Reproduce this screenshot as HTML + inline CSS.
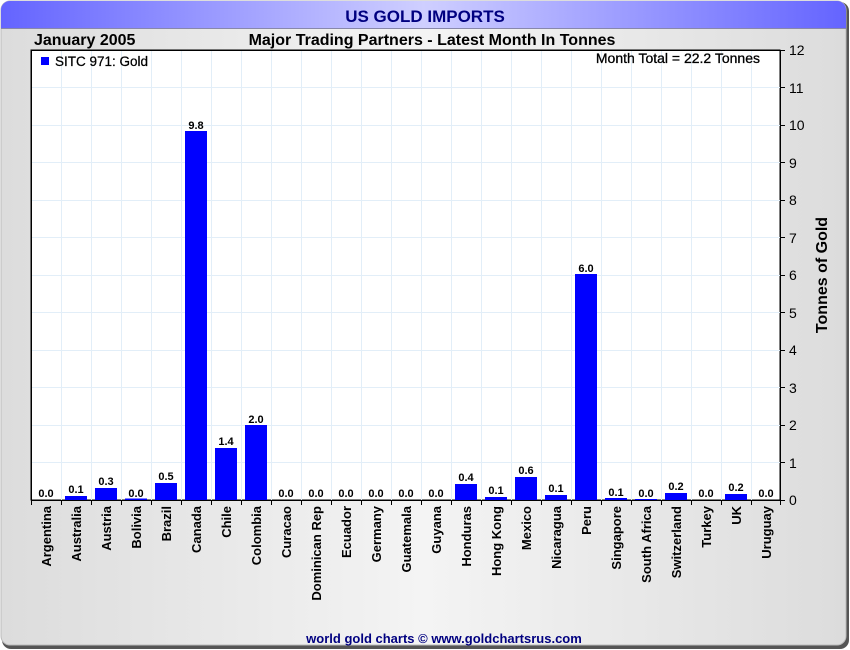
<!DOCTYPE html>
<html><head><meta charset="utf-8"><style>
body{margin:0;background:#fff;width:850px;height:650px;overflow:hidden}
svg{display:block;font-family:"Liberation Sans",Arial,sans-serif}
</style></head><body>
<svg width="850" height="650" viewBox="0 0 850 650">
<defs>
<linearGradient id="tb" x1="0" x2="1" y1="0" y2="0">
<stop offset="0" stop-color="#6464ff"/><stop offset="0.5" stop-color="#cfcfff"/><stop offset="1" stop-color="#6464ff"/></linearGradient>
<linearGradient id="bg" x1="0" x2="1" y1="0" y2="0">
<stop offset="0" stop-color="#dcdcdc"/><stop offset="0.5" stop-color="#f4f4f4"/><stop offset="1" stop-color="#dcdcdc"/></linearGradient>
</defs>
<rect x="2" y="2" width="847" height="647" rx="9" fill="#555"/>
<rect x="1" y="1" width="845" height="644" rx="9" fill="url(#bg)" stroke="#bbb"/>
<path d="M1 28 V10 A9 9 0 0 1 10 1 H837 A9 9 0 0 1 846 10 V28 Z" fill="url(#tb)"/>
<line x1="1" y1="28.5" x2="846" y2="28.5" stroke="#8888aa"/>
<text x="425" y="22" text-anchor="middle" font-size="17" font-weight="bold" fill="#000080">US GOLD IMPORTS</text>
<text x="34" y="45" font-size="16" font-weight="bold">January 2005</text>
<text x="432" y="45" text-anchor="middle" font-size="16" font-weight="bold">Major Trading Partners - Latest Month In Tonnes</text>
<rect x="31" y="50" width="749" height="450" fill="#fff" stroke="#000"/>
<g stroke="#e2eef8" stroke-width="1">
<path d="M61.5 51V500M91.5 51V500M121.5 51V500M151.5 51V500M181.5 51V500M211.5 51V500M241.5 51V500M271.5 51V500M301.5 51V500M331.5 51V500M361.5 51V500M391.5 51V500M421.5 51V500M451.5 51V500M481.5 51V500M511.5 51V500M541.5 51V500M571.5 51V500M601.5 51V500M631.5 51V500M661.5 51V500M691.5 51V500M721.5 51V500M751.5 51V500"/>
<path d="M32 87.5H780M32 125.5H780M32 162.5H780M32 200.5H780M32 237.5H780M32 275.5H780M32 312.5H780M32 350.5H780M32 387.5H780M32 425.5H780M32 462.5H780"/>
</g>
<rect x="31.5" y="50.5" width="749" height="450" fill="none" stroke="#000"/>
<rect x="41" y="57" width="8" height="8" fill="#0000ff"/>
<text x="55" y="66" font-size="13.5" stroke="#000" stroke-width="0.25">SITC 971: Gold</text>
<text x="760" y="63" text-anchor="end" font-size="14" stroke="#000" stroke-width="0.3">Month Total = 22.2 Tonnes</text>
<g fill="#0000ff">
<rect x="65" y="496" width="22" height="4"/>
<rect x="95" y="488" width="22" height="12"/>
<rect x="125" y="498.5" width="22" height="1.5"/>
<rect x="155" y="483" width="22" height="17"/>
<rect x="185" y="131" width="22" height="369"/>
<rect x="215" y="448" width="22" height="52"/>
<rect x="245" y="425" width="22" height="75"/>
<rect x="455" y="484" width="22" height="16"/>
<rect x="485" y="497" width="22" height="3"/>
<rect x="515" y="477" width="22" height="23"/>
<rect x="545" y="495" width="22" height="5"/>
<rect x="575" y="274" width="22" height="226"/>
<rect x="605" y="498" width="22" height="2"/>
<rect x="635" y="499" width="22" height="1"/>
<rect x="665" y="493" width="22" height="7"/>
<rect x="725" y="494" width="22" height="6"/>
</g>
<g font-size="11" font-weight="bold" text-anchor="middle">
<text x="46" y="497">0.0</text><text x="76" y="493">0.1</text><text x="106" y="485">0.3</text><text x="136" y="497">0.0</text><text x="166" y="480">0.5</text><text x="196" y="129">9.8</text><text x="226" y="445">1.4</text><text x="256" y="423">2.0</text><text x="286" y="497">0.0</text><text x="316" y="497">0.0</text><text x="346" y="497">0.0</text><text x="376" y="497">0.0</text><text x="406" y="497">0.0</text><text x="436" y="497">0.0</text><text x="466" y="481">0.4</text><text x="496" y="494">0.1</text><text x="526" y="474">0.6</text><text x="556" y="492">0.1</text><text x="586" y="272">6.0</text><text x="616" y="496">0.1</text><text x="646" y="497">0.0</text><text x="676" y="490">0.2</text><text x="706" y="497">0.0</text><text x="736" y="491">0.2</text><text x="766" y="497">0.0</text>
</g>
<path d="M31.5 500V505M61.5 500V505M91.5 500V505M121.5 500V505M151.5 500V505M181.5 500V505M211.5 500V505M241.5 500V505M271.5 500V505M301.5 500V505M331.5 500V505M361.5 500V505M391.5 500V505M421.5 500V505M451.5 500V505M481.5 500V505M511.5 500V505M541.5 500V505M571.5 500V505M601.5 500V505M631.5 500V505M661.5 500V505M691.5 500V505M721.5 500V505M751.5 500V505M780.5 500V505" stroke="#000"/>
<path d="M780 50.5H785M780 87.5H785M780 125.5H785M780 162.5H785M780 200.5H785M780 237.5H785M780 275.5H785M780 312.5H785M780 350.5H785M780 387.5H785M780 425.5H785M780 462.5H785M780 500.5H785" stroke="#000"/>
<g font-size="14" fill="#000">
<text x="789" y="55">12</text><text x="789" y="93">11</text><text x="789" y="130">10</text><text x="789" y="168">9</text><text x="789" y="205">8</text><text x="789" y="243">7</text><text x="789" y="280">6</text><text x="789" y="318">5</text><text x="789" y="355">4</text><text x="789" y="393">3</text><text x="789" y="430">2</text><text x="789" y="468">1</text><text x="789" y="505">0</text>
</g>
<text transform="translate(827,275) rotate(-90)" text-anchor="middle" font-size="16" font-weight="bold">Tonnes of Gold</text>
<g font-size="13" font-weight="bold" text-anchor="end">
<text transform="translate(51,506) rotate(-90)">Argentina</text>
<text transform="translate(81,506) rotate(-90)">Australia</text>
<text transform="translate(111,506) rotate(-90)">Austria</text>
<text transform="translate(141,506) rotate(-90)">Bolivia</text>
<text transform="translate(171,506) rotate(-90)">Brazil</text>
<text transform="translate(201,506) rotate(-90)">Canada</text>
<text transform="translate(231,506) rotate(-90)">Chile</text>
<text transform="translate(261,506) rotate(-90)">Colombia</text>
<text transform="translate(291,506) rotate(-90)">Curacao</text>
<text transform="translate(321,506) rotate(-90)">Dominican Rep</text>
<text transform="translate(351,506) rotate(-90)">Ecuador</text>
<text transform="translate(381,506) rotate(-90)">Germany</text>
<text transform="translate(411,506) rotate(-90)">Guatemala</text>
<text transform="translate(441,506) rotate(-90)">Guyana</text>
<text transform="translate(471,506) rotate(-90)">Honduras</text>
<text transform="translate(501,506) rotate(-90)">Hong Kong</text>
<text transform="translate(531,506) rotate(-90)">Mexico</text>
<text transform="translate(561,506) rotate(-90)">Nicaragua</text>
<text transform="translate(591,506) rotate(-90)">Peru</text>
<text transform="translate(621,506) rotate(-90)">Singapore</text>
<text transform="translate(651,506) rotate(-90)">South Africa</text>
<text transform="translate(681,506) rotate(-90)">Switzerland</text>
<text transform="translate(711,506) rotate(-90)">Turkey</text>
<text transform="translate(741,506) rotate(-90)">UK</text>
<text transform="translate(771,506) rotate(-90)">Uruguay</text>
</g>
<text x="444" y="643" text-anchor="middle" font-size="13" font-weight="bold" fill="#000080">world gold charts © www.goldchartsrus.com</text>
</svg>
</body></html>
